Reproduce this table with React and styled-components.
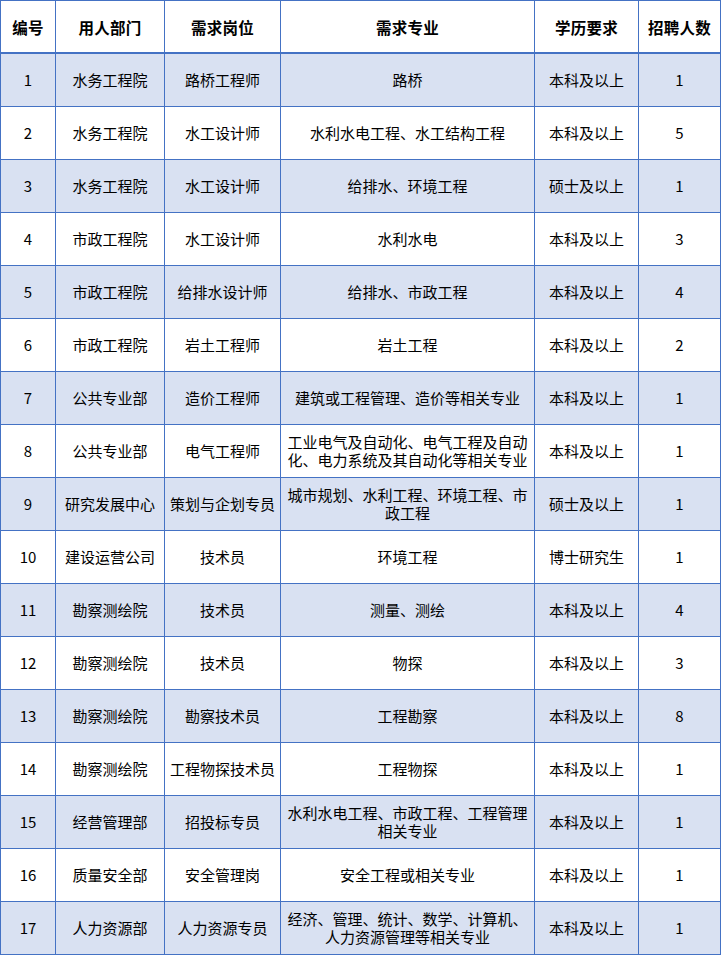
import React from "react";
import styled, { createGlobalStyle } from "styled-components";

const Global = createGlobalStyle`
  html, body { margin: 0; padding: 0; background: #ffffff; }
  body { font-family: "Noto Sans CJK SC", "Noto Sans", sans-serif; color: #000; }
`;

const COLS = "55px 109px 116px 254px 104px 82px";
const BORDER = "#4472c4";

const Table = styled.div`
  display: grid;
  grid-template-columns: ${COLS};
  width: 721px;
  border-left: 1px solid ${BORDER};
  border-top: 1px solid ${BORDER};
  box-sizing: border-box;
`;

const Cell = styled.div`
  box-sizing: border-box;
  display: flex;
  align-items: center;
  justify-content: center;
  text-align: center;
  border-right: 1px solid ${BORDER};
  border-bottom: ${(p) => (p.$head ? 2 : 1)}px solid ${BORDER};
  height: ${(p) => (p.$head ? 53 : 53)}px;
  background: ${(p) => (p.$shade ? "#d9e1f2" : "#ffffff")};
  font-size: ${(p) => (p.$head ? "15.5px" : "15px")};
  font-weight: ${(p) => (p.$head ? 700 : 400)};
  line-height: 18px;
  white-space: pre-line;
  padding: 0 2px;
  letter-spacing: ${(p) => (p.$head ? "0.2px" : "0")};
`;

const headers = ["编号", "用人部门", "需求岗位", "需求专业", "学历要求", "招聘人数"];

const rows = [
  ["1", "水务工程院", "路桥工程师", "路桥", "本科及以上", "1"],
  ["2", "水务工程院", "水工设计师", "水利水电工程、水工结构工程", "本科及以上", "5"],
  ["3", "水务工程院", "水工设计师", "给排水、环境工程", "硕士及以上", "1"],
  ["4", "市政工程院", "水工设计师", "水利水电", "本科及以上", "3"],
  ["5", "市政工程院", "给排水设计师", "给排水、市政工程", "本科及以上", "4"],
  ["6", "市政工程院", "岩土工程师", "岩土工程", "本科及以上", "2"],
  ["7", "公共专业部", "造价工程师", "建筑或工程管理、造价等相关专业", "本科及以上", "1"],
  ["8", "公共专业部", "电气工程师", "工业电气及自动化、电气工程及自动\n化、电力系统及其自动化等相关专业", "本科及以上", "1"],
  ["9", "研究发展中心", "策划与企划专员", "城市规划、水利工程、环境工程、市\n政工程", "硕士及以上", "1"],
  ["10", "建设运营公司", "技术员", "环境工程", "博士研究生", "1"],
  ["11", "勘察测绘院", "技术员", "测量、测绘", "本科及以上", "4"],
  ["12", "勘察测绘院", "技术员", "物探", "本科及以上", "3"],
  ["13", "勘察测绘院", "勘察技术员", "工程勘察", "本科及以上", "8"],
  ["14", "勘察测绘院", "工程物探技术员", "工程物探", "本科及以上", "1"],
  ["15", "经营管理部", "招投标专员", "水利水电工程、市政工程、工程管理\n相关专业", "本科及以上", "1"],
  ["16", "质量安全部", "安全管理岗", "安全工程或相关专业", "本科及以上", "1"],
  ["17", "人力资源部", "人力资源专员", "经济、管理、统计、数学、计算机、\n人力资源管理等相关专业", "本科及以上", "1"],
];

export default function App() {
  return (
    <>
      <Global />
      <Table>
        {headers.map((h) => (
          <Cell key={h} $head>
            {h}
          </Cell>
        ))}
        {rows.map((r, i) =>
          r.map((c, j) => (
            <Cell key={`${i}-${j}`} $shade={i % 2 === 0}>
              {c}
            </Cell>
          ))
        )}
      </Table>
    </>
  );
}
